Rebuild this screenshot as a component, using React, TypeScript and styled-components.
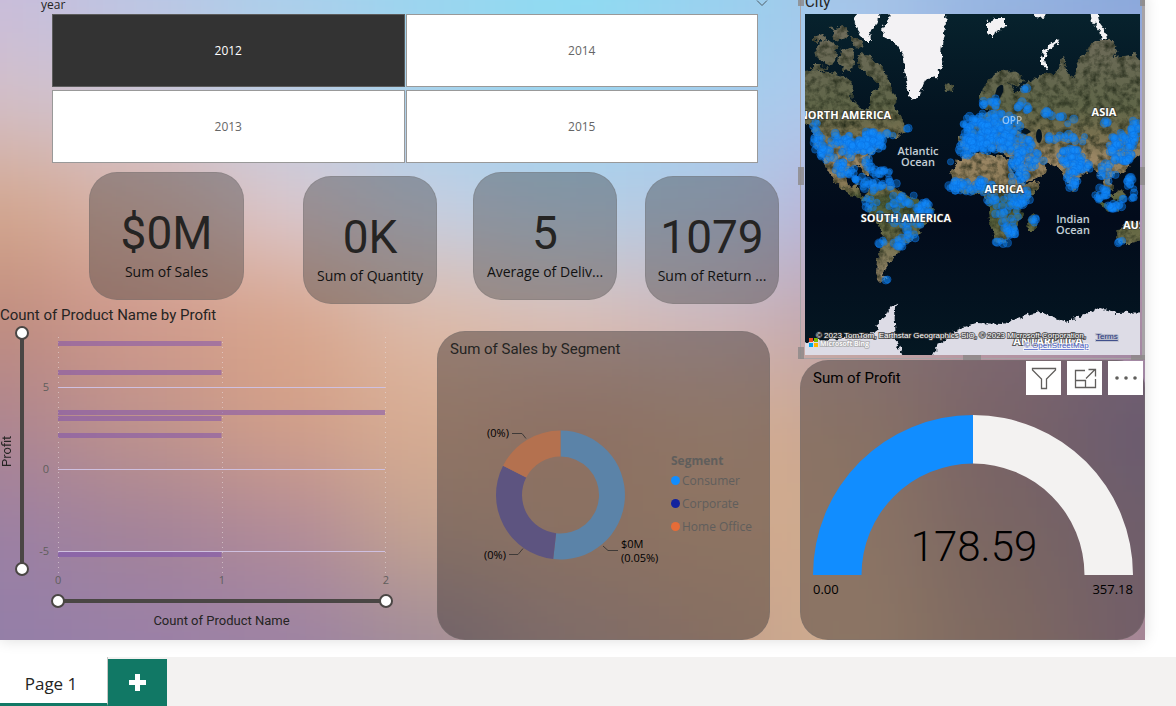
import React, { useState } from "react";
import styled, { createGlobalStyle, css } from "styled-components";

const UI = `"Open Sans", "Noto Sans", sans-serif`;
const DIN = `Roboto, "Open Sans", sans-serif`;

const GlobalStyle = createGlobalStyle`
  * { box-sizing: border-box; }
  body { margin: 0; background: #fff; font-family: ${UI}; color: #252423; overflow: hidden; }
  button { font: inherit; padding: 0; margin: 0; cursor: pointer; }
`;

/* ---------- page shell ---------- */

const Stage = styled.main`
  padding-right: 31px;
  padding-bottom: 17px;
  overflow: hidden;
`;

const Report = styled.section`
  position: relative;
  isolation: isolate;
  display: grid;
  grid-template-columns: minmax(0, 1fr) 345px;
  margin-top: -6px;
  box-shadow: 0 0 14px rgba(0, 0, 0, 0.14);
`;

const Backdrop = styled.svg`
  position: absolute;
  inset: 0;
  z-index: -1;
  width: 100%;
  height: 100%;
`;

const Column = styled.div`
  display: flex;
  flex-direction: column;
  min-width: 0;
`;

/* ---------- slicer ---------- */

const SlicerHeader = styled.div`
  display: flex;
  justify-content: space-between;
  height: 20px;
  padding: 2px 32px 0 41px;
  font-size: 12px;
  line-height: 18px;
`;

const SlicerGrid = styled.div`
  display: grid;
  grid-template-columns: 1fr 1fr;
  gap: 3px 1px;
  padding: 0 42px 0 52px;
`;

const YearButton = styled.button<{ $on: boolean }>`
  height: 73px;
  border: 1px solid ${(p) => (p.$on ? "#5c5c5c" : "#999")};
  background: ${(p) => (p.$on ? "#333" : "#fff")};
  color: ${(p) => (p.$on ? "#fff" : "#666")};
  font-size: 12px;
`;

/* ---------- cards ---------- */

const KpiRow = styled.div`
  display: flex;
  align-items: flex-start;
  height: 132px;
  margin-top: 9px;
  padding-right: 21px;
`;

const KpiCard = styled.article<{ $grow: number; $gap: number; $low?: boolean }>`
  flex: ${(p) => p.$grow} 1 0;
  min-width: 0;
  height: 128px;
  margin-left: ${(p) => p.$gap}px;
  margin-top: ${(p) => (p.$low ? 4 : 0)}px;
  padding: 32px 9px 0;
  border: 1px solid rgba(120, 115, 115, 0.3);
  border-radius: 28px;
  background: rgba(48, 46, 46, 0.36);
  text-align: center;
`;

const KpiValue = styled.div`
  font: 400 46px/56px ${DIN};
  color: #252423;
`;

const KpiLabel = styled.div`
  overflow: hidden;
  font-size: 14px;
  line-height: 22px;
  color: #111;
  white-space: nowrap;
  text-overflow: ellipsis;
`;

const Title = styled.h2<{ $dark?: boolean }>`
  margin: 0;
  font: 400 15px/20px ${DIN};
  color: ${(p) => (p.$dark ? "#000" : "#252423")};
`;

const panel = css`
  border: 1px solid rgba(120, 115, 115, 0.35);
  border-radius: 28px;
  background: rgba(40, 36, 34, 0.4);
`;

/* ---------- bar chart ---------- */

const LowerRow = styled.div`
  display: grid;
  grid-template-columns: minmax(0, 1fr) 333px;
  column-gap: 37px;
  padding-right: 30px;
`;

const BarPanel = styled.section`
  display: grid;
  grid-template-columns: 14px 16px 28px minmax(0, 1fr);
  grid-template-rows: 21px 262px 26px 16px;
  padding-top: 1px;
  padding-right: 7px;
`;

const BarTitle = styled(Title)`
  grid-column: 1 / -1;
`;

const AxisName = styled.div<{ $vertical?: boolean }>`
  font: 400 13px/14px ${DIN};
  text-align: center;
  ${(p) =>
    p.$vertical
      ? css`height: 250px; writing-mode: vertical-rl; transform: rotate(180deg);`
      : css`grid-column: 4; margin-right: 8px;`}
`;

const RangePair = styled.div<{ $vertical?: boolean }>`
  display: grid;
  ${(p) =>
    p.$vertical
      ? css`
          justify-content: center;
          height: 250px;
          background: linear-gradient(#4a4644, #4a4644) center / 4px 234px no-repeat;
        `
      : css`
          grid-column: 4;
          margin-left: -7px;
          align-items: center;
          background: linear-gradient(#4a4644, #4a4644) center / calc(100% - 14px) 4px no-repeat;
        `}
`;

const thumb = css`
  width: 14px;
  height: 14px;
  border: 2px solid #4a4644;
  border-radius: 50%;
  background: #fff;
  pointer-events: auto;
`;

const Range = styled.input<{ $vertical?: boolean }>`
  grid-area: 1 / 1;
  appearance: none;
  margin: 0;
  background: none;
  pointer-events: none;
  ${(p) =>
    p.$vertical
      ? css`writing-mode: vertical-lr; direction: rtl; width: 14px; height: 250px;`
      : css`width: 100%; height: 14px;`}
  &::-webkit-slider-thumb { appearance: none; ${thumb} }
`;

const Ticks = styled.div`
  display: flex;
  flex-direction: column;
  gap: 64px;
  padding: 52px 9px 0 0;
  font-size: 11px;
  line-height: 18px;
  text-align: right;
  color: #605e5c;
`;

const Plot = styled.div`
  display: flex;
  flex-direction: column;
  padding-top: 11px;
`;

const PlotSvg = styled.svg`
  display: block;
  width: 100%;
  height: 236px;
  overflow: visible;
`;

const XTicks = styled.div`
  display: flex;
  justify-content: space-between;
  margin: 0 4px 0 -3px;
  font-size: 11px;
  line-height: 14px;
  color: #605e5c;
`;

/* ---------- donut ---------- */

const DonutPanel = styled.section`
  ${panel}
  height: 309px;
  margin-top: 27px;
  padding: 7px 12px;
`;

const DonutBody = styled.div`
  display: flex;
  align-items: center;
  height: 272px;
`;

const Legend = styled.ul`
  margin: 0 0 0 9px;
  padding: 0;
  list-style: none;
  font-size: 12px;
  line-height: 23px;
  color: #605e5c;
  white-space: nowrap;
`;

const LegendTitle = styled.li`
  font-weight: 700;
  line-height: 16px;
`;

const LegendItem = styled.li`
  display: flex;
  align-items: center;
  gap: 2px;
`;

const Dot = styled.i<{ $c: string }>`
  width: 9px;
  height: 9px;
  border-radius: 50%;
  background: ${(p) => p.$c};
`;

/* ---------- map ---------- */

const MapVisual = styled.section`
  position: relative;
  height: 366px;
  padding: 0 5px;
`;

const MapTitle = styled(Title)`
  height: 20px;
  line-height: 16px;
`;

const MapFrame = styled.div`
  position: absolute;
  inset: 0 0 1px 0;
  border: solid #a7a3a6;
  border-width: 0 3px 1px 1px;
  pointer-events: none;
`;

const Handle = styled.i<{ $x: string; $y: string; $w: number; $h: number }>`
  position: absolute;
  ${(p) => p.$x};
  ${(p) => p.$y};
  width: ${(p) => p.$w}px;
  height: ${(p) => p.$h}px;
  background: rgba(140, 136, 136, 0.8);
`;

const MapSvg = styled.svg`
  display: block;
  width: 335px;
  height: 341px;
`;

/* ---------- gauge ---------- */

const GaugePanel = styled.section`
  ${panel}
  position: relative;
  height: 280px;
  padding: 7px 11px 0 12px;
`;

const Tools = styled.div`
  position: absolute;
  top: 0;
  right: 1px;
  display: flex;
  gap: 6px;
`;

const Tool = styled.button`
  display: grid;
  place-items: center;
  width: 35px;
  height: 34px;
  border: 0;
  background: #fff;
  color: #605e5c;
`;

const GaugeSvg = styled.svg`
  display: block;
  width: 100%;
  height: 160px;
  margin-top: 27px;
`;

const Bounds = styled.div`
  display: flex;
  justify-content: space-between;
  padding-top: 4px;
  font-size: 13px;
  line-height: 20px;
  color: #000;
`;

/* ---------- page tabs ---------- */

const TabBar = styled.nav`
  display: flex;
  height: 49px;
  background: #f3f2f1;
`;

const PageTab = styled.button`
  width: 108px;
  padding: 6px 5px 0 0;
  border: solid #117865;
  border-width: 0 0 3px;
  border-right: 1px solid #c8c6c4;
  background: #fff;
  font-size: 17px;
  color: #252423;
`;

const AddTab = styled.button`
  display: grid;
  place-items: center;
  width: 59px;
  margin-top: 2px;
  border: 0;
  background: #117865;
`;

/* ---------- data ---------- */

const MESH = [
  "c8bcdc b9c6e6 a8cfec 98d6f0 8cdcf2 98d2ef a4c4e8 95b6e2 86a9dc",
  "d3c0c8 cfc6d6 bfcde4 a8d2ec 9cd4f0 a5cdee b0c8ec 9aa8d8 a7a5d8",
  "d4a68c d9b4a8 dcc8ce c6cfe4 b6cfe8 b3c8e4 bbb0d8 b8a0c0 b496b8",
  "c08c7e d0998a d8a48a ddbaa8 dcc0b8 ceb6bc c0a3ac b898a8 aa8ba2",
  "ad8590 c0948c d29f88 d8ad92 d0a28c d4ad92 c8a690 ae8c96 9580a4",
  "9b80a4 a28299 b08a98 c5a490 cda68c d2aa8c cdaa90 b0928c 9f869a",
  "937fa8 9a80a8 9c82a4 a08c98 b89c98 c4a08c d0ae90 b8988a a58596",
].map((r) => r.split(" "));

const LAND = [
  // North America
  "-12,58 10,56 22,58 35,60 45,66 48,74 46,84 54,92 63,96 66,88 66,78 74,72 80,66 84,74 92,82 88,92 96,102 100,116 92,124 80,124 74,134 66,140 61,149 66,160 60,160 54,152 44,156 40,164 44,172 52,170 54,180 64,184 72,187 66,190 52,184 40,177 30,168 22,154 14,140 8,124 8,112 -12,104",
  // Arctic islands
  "10,34 20,26 30,30 34,42 26,52 12,46",
  "8,50 18,50 22,56 8,56",
  "36,34 48,36 50,52 40,58 34,50",
  "54,40 66,42 78,56 88,72 84,84 78,78 70,66 60,58 52,50",
  "26,14 40,12 44,22 30,26",
  "10,22 20,20 18,28 10,28",
  "46,24 56,24 60,32 50,34",
  // Iceland
  "138,71 143,69 149,72 147,76 141,77",
  // South America
  "63,173 71,169 91,173 101,181 124,189 127,196 119,213 114,218 104,229 93,236 86,246 81,253 78,263 83,268 74,266 71,259 72,246 76,233 77,216 64,199 62,186",
  // Scandinavia, Europe and Asia
  "175,86 178,76 188,61 202,54 218,66 214,74 205,70 210,80 225,66 238,61 255,58 254,46 258,44 262,59 270,63 272,48 282,36 293,26 308,26 313,33 308,43 328,41 347,53 347,130 328,146 318,160 306,160 308,176 302,180 296,164 286,152 274,164 268,178 260,164 252,152 242,148 240,160 226,168 214,164 208,150 204,142 190,136 172,132 166,138 156,134 156,124 164,120 164,108 174,102 186,98 178,92",
  // Africa
  "151,149 160,141 176,138 203,144 212,158 222,170 234,168 232,176 220,190 215,205 208,220 198,230 190,228 184,206 182,184 176,180 158,180 148,172 145,158",
  "228,199 233,203 230,216 224,216 223,209",
  // Australia
  "347,203 325,208 317,213 312,219 313,229 325,229 347,224",
  "290,176 300,190 314,194 312,198 296,192",
  "304,182 314,176 320,182 314,190",
];

const SNOW = [
  "86,-12 138,-12 141,10 138,24 136,40 138,53 131,63 120,66 115,80 110,86 104,82 101,66 100,53 98,40 91,30 80,23 77,16 82,8",
  "48,4 58,-8 78,-8 70,12 64,18 68,28 60,28 52,16",
  "182,8 190,4 200,4 200,12 190,18 188,24 182,18",
  "225,-6 246,-6 240,4 230,3",
  "286,-6 292,-6 294,8 300,16 302,26 296,26 294,16 288,8",
  "253,25 255,28 244,36 240,44 242,54 236,52 236,44 242,32",
];

const ANTARCTIC = [
  "-12,360 -12,331 11,326 48,323 68,319 74,314 70,311 80,303 83,296 94,288 89,296 90,309 91,329 99,341 99,360",
  "128,360 128,341 134,329 151,316 171,309 198,310 222,301 235,298 262,308 282,299 295,294 312,299 347,298 347,360",
];

/* Clusters of customer locations: centre x, centre y, spread x, spread y, count. */
const CLUSTERS = [
  [54, 128, 24, 11, 64], [11, 120, 4, 13, 12], [16, 138, 10, 6, 12], [32, 134, 20, 16, 20], [66, 128, 14, 10, 32],
  [40, 156, 10, 8, 20], [54, 164, 6, 3, 6], [64, 150, 4, 7, 8], [76, 158, 9, 4, 12],
  [66, 172, 9, 6, 14], [84, 170, 9, 5, 9], [66, 190, 6, 8, 8], [100, 186, 16, 6, 14],
  [118, 196, 9, 10, 22], [105, 214, 12, 12, 20], [95, 228, 6, 5, 10], [77, 229, 3, 4, 4],
  [86, 200, 14, 10, 8], [81, 266, 2, 2, 2],
  [172, 116, 16, 18, 84], [196, 112, 20, 14, 74], [182, 130, 22, 8, 36], [162, 134, 9, 9, 20],
  [186, 88, 16, 4, 12], [218, 93, 6, 6, 8], [219, 74, 3, 2, 3], [242, 100, 6, 3, 6],
  [210, 130, 18, 8, 30], [224, 144, 16, 10, 30], [212, 154, 7, 12, 12], [218, 162, 4, 8, 6],
  [256, 124, 16, 8, 14], [262, 106, 10, 6, 5], [302, 106, 4, 7, 4], [276, 125, 6, 3, 2],
  [266, 144, 12, 10, 40], [276, 153, 10, 6, 18], [267, 166, 6, 10, 18],
  [316, 134, 13, 16, 60], [330, 118, 6, 12, 20], [302, 158, 9, 10, 12], [296, 180, 7, 8, 16],
  [309, 192, 8, 3, 14], [324, 178, 9, 10, 10], [323, 165, 4, 4, 6], [315, 228, 3, 3, 3],
  [160, 172, 17, 6, 32], [180, 172, 8, 9, 22], [208, 188, 12, 10, 20], [188, 190, 6, 14, 9],
  [204, 204, 10, 12, 14], [206, 219, 5, 6, 10], [196, 229, 8, 3, 5],
  [222, 184, 6, 8, 8], [210, 164, 8, 6, 5], [230, 207, 3, 4, 5], [101, 114, 3, 1, 2], [86, 120, 5, 2, 3], [145, 147, 1, 1, 1],
];

function scatter() {
  let seed = 11;
  const rnd = () => {
    seed = (seed * 16807) % 2147483647;
    return seed / 2147483647;
  };
  return CLUSTERS.flatMap(([cx, cy, sx, sy, n]) =>
    Array.from({ length: n }, () => {
      const a = rnd() * Math.PI * 2;
      const d = Math.sqrt(rnd());
      return { x: cx + Math.cos(a) * d * sx, y: cy + Math.sin(a) * d * sy, r: 3 + rnd() * 1.2 };
    })
  );
}
const PINS = scatter();

const KPIS = [
  { value: "$0M", label: "Sum of Sales", grow: 135, gap: 89, low: false },
  { value: "0K", label: "Sum of Quantity", grow: 114, gap: 59, low: true },
  { value: "5", label: "Average of Deliv...", grow: 124, gap: 36, low: false },
  { value: "1079", label: "Sum of Return ...", grow: 114, gap: 28, low: true },
];

const BARS = [
  { y: 4, n: 1 }, { y: 33, n: 1 }, { y: 73, n: 2 }, { y: 79, n: 1 }, { y: 96, n: 1 }, { y: 215, n: 1 },
];

const SEGMENTS = [
  { name: "Consumer", dot: "#118dff", fill: "#5b83a8", from: 0, to: 186.5 },
  { name: "Corporate", dot: "#12239e", fill: "#5d5480", from: 186.5, to: 297 },
  { name: "Home Office", dot: "#e66c37", fill: "#b4714f", from: 297, to: 360 },
];

function ring(cx: number, cy: number, R: number, r: number, from: number, to: number) {
  const pt = (rad: number, deg: number) => {
    const a = (deg * Math.PI) / 180;
    return `${(cx + rad * Math.sin(a)).toFixed(2)} ${(cy - rad * Math.cos(a)).toFixed(2)}`;
  };
  const big = to - from > 180 ? 1 : 0;
  return `M${pt(R, from)}A${R} ${R} 0 ${big} 1 ${pt(R, to)}L${pt(r, to)}A${r} ${r} 0 ${big} 0 ${pt(r, from)}Z`;
}

/* ---------- drawings ---------- */

function Background() {
  return (
    <Backdrop viewBox="0 0 1144 640" preserveAspectRatio="none" aria-hidden="true">
      <defs>
        <filter id="soft" filterUnits="userSpaceOnUse" x="-300" y="-300" width="1744" height="1240" colorInterpolationFilters="sRGB">
          <feGaussianBlur stdDeviation="48" />
        </filter>
      </defs>
      <g filter="url(#soft)">
        {MESH.map((row, j) =>
          row.map((c, i) => {
            const left = i === 0 ? -300 : i * 143 - 72;
            const right = i === 8 ? 1444 : i * 143 + 72;
            const top = j === 0 ? -300 : j * 107 - 54;
            const bottom = j === 6 ? 940 : j * 107 + 54;
            return <rect key={`${i}-${j}`} x={left} y={top} width={right - left} height={bottom - top} fill={`#${c}`} />;
          })
        )}
      </g>
    </Backdrop>
  );
}

function WorldMap() {
  const label = {
    fill: "#fff",
    stroke: "#2a2a2a",
    strokeWidth: 2,
    strokeOpacity: 0.5,
    paintOrder: "stroke" as const,
    fontFamily: UI,
    fontWeight: 700,
    fontSize: 11,
    textAnchor: "middle" as const,
  };
  const sea = { ...label, fill: "#c3ced6", stroke: "#0a1a26", fontWeight: 600 };
  return (
    <MapSvg viewBox="0 0 335 341" role="img" aria-label="Map of cities">
      <defs>
        <linearGradient id="sea" x1="0" y1="0" x2="0" y2="1">
          <stop offset="0" stopColor="#07222d" />
          <stop offset="0.3" stopColor="#031320" />
          <stop offset="0.6" stopColor="#020b1b" />
          <stop offset="1" stopColor="#041722" />
        </linearGradient>
        <linearGradient id="ground" gradientUnits="userSpaceOnUse" x1="0" y1="20" x2="0" y2="260">
          <stop offset="0" stopColor="#6e6b5a" />
          <stop offset="0.3" stopColor="#5f6548" />
          <stop offset="0.42" stopColor="#77704f" />
          <stop offset="0.52" stopColor="#9a8664" />
          <stop offset="0.62" stopColor="#8d7b58" />
          <stop offset="0.7" stopColor="#4a5c36" />
          <stop offset="0.8" stopColor="#5f653f" />
          <stop offset="1" stopColor="#948468" />
        </linearGradient>
        <filter id="terrain" filterUnits="userSpaceOnUse" x="-20" y="-20" width="375" height="381" colorInterpolationFilters="sRGB">
          <feTurbulence type="fractalNoise" baseFrequency="0.14" numOctaves="4" seed="4" result="n" />
          <feDisplacementMap in="SourceGraphic" in2="n" scale="9" xChannelSelector="R" yChannelSelector="G" result="d" />
          <feColorMatrix in="n" type="matrix" values="0 0 0 0 0.1  0 0 0 0 0.13  0 0 0 0 0.07  0 0 1.6 0 -0.64" result="m" />
          <feComposite in="m" in2="d" operator="in" result="s" />
          <feMerge result="j">
            <feMergeNode in="d" />
            <feMergeNode in="s" />
          </feMerge>
          <feGaussianBlur in="j" stdDeviation="0.5" />
        </filter>
        <filter id="coast" filterUnits="userSpaceOnUse" x="-20" y="-20" width="375" height="401" colorInterpolationFilters="sRGB">
          <feTurbulence type="fractalNoise" baseFrequency="0.2" numOctaves="3" seed="9" result="n" />
          <feDisplacementMap in="SourceGraphic" in2="n" scale="7" xChannelSelector="R" yChannelSelector="G" result="d" />
          <feGaussianBlur in="d" stdDeviation="0.5" />
        </filter>
      </defs>
      <rect width="335" height="341" fill="url(#sea)" />
      <g filter="url(#terrain)" fill="url(#ground)">
        {LAND.map((p) => <polygon key={p} points={p} />)}
      </g>
      <g fill="#041420">
        <ellipse cx="234" cy="122" rx="3" ry="7" />
        <path d="M192 74q8-8 6 4l-5 10-4-4z" />
        <path d="M212 116q8-5 14 2l-6 3z" />
        <path d="M204 148l14 20-3 1-12-19z" />
      </g>
      <g filter="url(#coast)">
        <g fill="#f3f2f4">{SNOW.map((p) => <polygon key={p} points={p} />)}</g>
        <g fill="#dddce6">{ANTARCTIC.map((p) => <polygon key={p} points={p} />)}</g>
      </g>
      <g fill="#118dff" fillOpacity="0.4" stroke="#0a6fe0" strokeOpacity="0.6" strokeWidth="0.8">
        {PINS.map((p, i) => <circle key={i} cx={p.x} cy={p.y} r={p.r} />)}
      </g>
      <text {...label} x="40" y="105">NORTH AMERICA</text>
      <text {...label} x="299" y="102">ASIA</text>
      <text {...label} x="318" y="215" textAnchor="start">AUS</text>
      <text {...label} x="207" y="110" opacity="0.55" stroke="none" fontWeight={600} fontSize={10}>OPP</text>
      <text {...label} x="199" y="179">AFRICA</text>
      <text {...label} x="101" y="208">SOUTH AMERICA</text>
      <text {...sea} x="113" y="141">Atlantic</text>
      <text {...sea} x="113" y="152">Ocean</text>
      <text {...sea} x="268" y="209">Indian</text>
      <text {...sea} x="268" y="220">Ocean</text>
      <text {...label} x="243" y="331" stroke="#333" strokeOpacity={0.8}>ANTARCTICA</text>
      <g>
        <rect x="4" y="324" width="4" height="4" fill="#f25022" />
        <rect x="9" y="324" width="4" height="4" fill="#7fba00" />
        <rect x="4" y="329" width="4" height="4" fill="#00a4ef" />
        <rect x="9" y="329" width="4" height="4" fill="#ffb900" />
      </g>
      <g fontFamily={`"Liberation Sans", Arial, sans-serif`} paintOrder="stroke" strokeWidth="2">
        <text x="15" y="332" fill="#fff" stroke="#999" strokeOpacity="0.6" fontFamily={UI} fontWeight="600" fontSize="7">Microsoft Bing</text>
        <text x="11" y="324" fill="#fff" stroke="#333" strokeOpacity="0.75" fontSize="8">
          © 2023 TomTom, Earthstar Geographics SIO, © 2023 Microsoft Corporation,
        </text>
        <a href="#osm">
          <text x="219" y="334" fill="#4a5fc8" stroke="#fff" strokeOpacity="0.6" textDecoration="underline" fontSize="8">© OpenStreetMap</text>
        </a>
        <a href="#terms">
          <text x="291" y="325" fill="#24357c" stroke="#b9bccb" textDecoration="underline" fontSize="8">Terms</text>
        </a>
      </g>
    </MapSvg>
  );
}

function BarChart() {
  const [x, setX] = useState([0, 100]);
  const [y, setY] = useState([0, 100]);
  return (
    <BarPanel>
      <BarTitle>Count of Product Name by Profit</BarTitle>
      <AxisName $vertical>Profit</AxisName>
      <RangePair $vertical>
        <Range $vertical type="range" aria-label="Profit minimum" value={y[0]} onChange={(e) => setY([+e.target.value, y[1]])} />
        <Range $vertical type="range" aria-label="Profit maximum" value={y[1]} onChange={(e) => setY([y[0], +e.target.value])} />
      </RangePair>
      <Ticks>
        <span>5</span>
        <span>0</span>
        <span>-5</span>
      </Ticks>
      <Plot>
        <PlotSvg viewBox="0 0 335 236" preserveAspectRatio="none" role="img" aria-label="Count of Product Name by Profit">
          {[0, 164, 327].map((gx) => (
            <line key={gx} x1={gx + 0.5} x2={gx + 0.5} y1="0" y2="236" stroke="#e6dcdc" strokeOpacity="0.6" strokeDasharray="1 4" />
          ))}
          {[50, 132, 214].map((gy) => (
            <rect key={gy} x="0" y={gy} width="327" height="1" fill="#cfc0e0" />
          ))}
          {BARS.map((b) => (
            <rect key={b.y} x="0" y={b.y} width={b.n * 163.5} height="5" fill="#7a4bb0" fillOpacity="0.5" />
          ))}
        </PlotSvg>
        <XTicks>
          <span>0</span>
          <span>1</span>
          <span>2</span>
        </XTicks>
      </Plot>
      <RangePair>
        <Range type="range" aria-label="Count minimum" value={x[0]} onChange={(e) => setX([+e.target.value, x[1]])} />
        <Range type="range" aria-label="Count maximum" value={x[1]} onChange={(e) => setX([x[0], +e.target.value])} />
      </RangePair>
      <AxisName>Count of Product Name</AxisName>
    </BarPanel>
  );
}

function Donut() {
  return (
    <DonutPanel>
      <Title>Sum of Sales by Segment</Title>
      <DonutBody>
        <svg width="212" height="150" viewBox="0 0 212 150" role="img" aria-label="Sum of Sales by Segment">
          {SEGMENTS.map((s) => (
            <path key={s.name} d={ring(110.5, 75, 64.5, 38.5, s.from, s.to)} fill={s.fill} />
          ))}
          <g fill="none" stroke="#3f3a38" strokeWidth="1">
            <path d="M62 13.500h10l4 5" />
            <path d="M59 134.500h9l5-6" />
            <path d="M153 126l5 4.500h10" />
          </g>
          <g fontFamily={UI} fontSize="11" fill="#000">
            <text x="37" y="17">(0%)</text>
            <text x="34" y="139">(0%)</text>
            <text x="171" y="128">$0M</text>
            <text x="171" y="142">(0.05%)</text>
          </g>
        </svg>
        <Legend>
          <LegendTitle>Segment</LegendTitle>
          {SEGMENTS.map((s) => (
            <LegendItem key={s.name}>
              <Dot $c={s.dot} />
              {s.name}
            </LegendItem>
          ))}
        </Legend>
      </DonutBody>
    </DonutPanel>
  );
}

function Gauge() {
  return (
    <GaugePanel>
      <Title $dark>Sum of Profit</Title>
      <Tools>
        <Tool aria-label="Filters">
          <svg width="26" height="24" viewBox="0 0 26 24" fill="none" stroke="currentColor" strokeWidth="1.300">
            <path d="M1.500 2.500h23v1.500l-9 9v9.500h-5v-9.500l-9-9z" />
          </svg>
        </Tool>
        <Tool aria-label="Focus mode">
          <svg width="24" height="24" viewBox="0 0 24 24" fill="none" stroke="currentColor" strokeWidth="1.300">
            <path d="M12 4.500H2.500v17h20V13M2.500 14.500h10v7M13 12.500l9-9M15.500 3.500h7v7" />
          </svg>
        </Tool>
        <Tool aria-label="More options">
          <svg width="24" height="6" viewBox="0 0 24 6" fill="currentColor">
            <circle cx="3" cy="3" r="1.800" />
            <circle cx="12" cy="3" r="1.800" />
            <circle cx="21" cy="3" r="1.800" />
          </svg>
        </Tool>
      </Tools>
      <GaugeSvg viewBox="0 0 320 160" role="img" aria-label="Sum of Profit 178.59">
        <path d={ring(160, 160, 160, 111.5, 0, 90)} fill="#f3f2f1" />
        <path d={ring(160, 160, 160, 111.5, -90, 0)} fill="#118dff" />
        <text x="161" y="146" textAnchor="middle" fontFamily={DIN} fontWeight="300" fontSize="42" fill="#000">
          178.59
        </text>
      </GaugeSvg>
      <Bounds>
        <span>0.00</span>
        <span>357.18</span>
      </Bounds>
    </GaugePanel>
  );
}

export default function App() {
  const [year, setYear] = useState("2012");
  return (
    <>
      <GlobalStyle />
      <Stage>
        <Report>
          <Background />
          <Column>
            <SlicerHeader>
              <span>year</span>
              <svg width="12" height="12" viewBox="0 0 12 12" fill="none" stroke="#4f5d66">
                <path d="M1 4.500l5 5 5-5" />
              </svg>
            </SlicerHeader>
            <SlicerGrid>
              {["2012", "2014", "2013", "2015"].map((y) => (
                <YearButton key={y} $on={y === year} aria-pressed={y === year} onClick={() => setYear(y)}>
                  {y}
                </YearButton>
              ))}
            </SlicerGrid>
            <KpiRow>
              {KPIS.map((k) => (
                <KpiCard key={k.label} $grow={k.grow} $gap={k.gap} $low={k.low}>
                  <KpiValue>{k.value}</KpiValue>
                  <KpiLabel>{k.label}</KpiLabel>
                </KpiCard>
              ))}
            </KpiRow>
            <LowerRow>
              <BarChart />
              <Donut />
            </LowerRow>
          </Column>
          <Column>
            <MapVisual>
              <MapTitle>City</MapTitle>
              <WorldMap />
              <MapFrame />
              <Handle $x="left: -2px" $y="top: 6px" $w={6} $h={6} />
              <Handle $x="left: -2px" $y="top: 173px" $w={6} $h={18} />
              <Handle $x="left: -2px" $y="bottom: 1px" $w={6} $h={12} />
              <Handle $x="left: 163px" $y="bottom: 0px" $w={18} $h={5} />
              <Handle $x="right: 0px" $y="top: 6px" $w={5} $h={6} />
              <Handle $x="right: 0px" $y="top: 173px" $w={5} $h={18} />
              <Handle $x="right: 0px" $y="bottom: 0px" $w={14} $h={5} />
            </MapVisual>
            <Gauge />
          </Column>
        </Report>
      </Stage>
      <TabBar>
        <PageTab>Page 1</PageTab>
        <AddTab aria-label="New page">
          <svg width="17" height="17" viewBox="0 0 17 17" fill="#fff" aria-hidden="true">
            <path d="M6 0h5v6h6v5h-6v6H6v-6H0V6h6z" />
          </svg>
        </AddTab>
      </TabBar>
    </>
  );
}
